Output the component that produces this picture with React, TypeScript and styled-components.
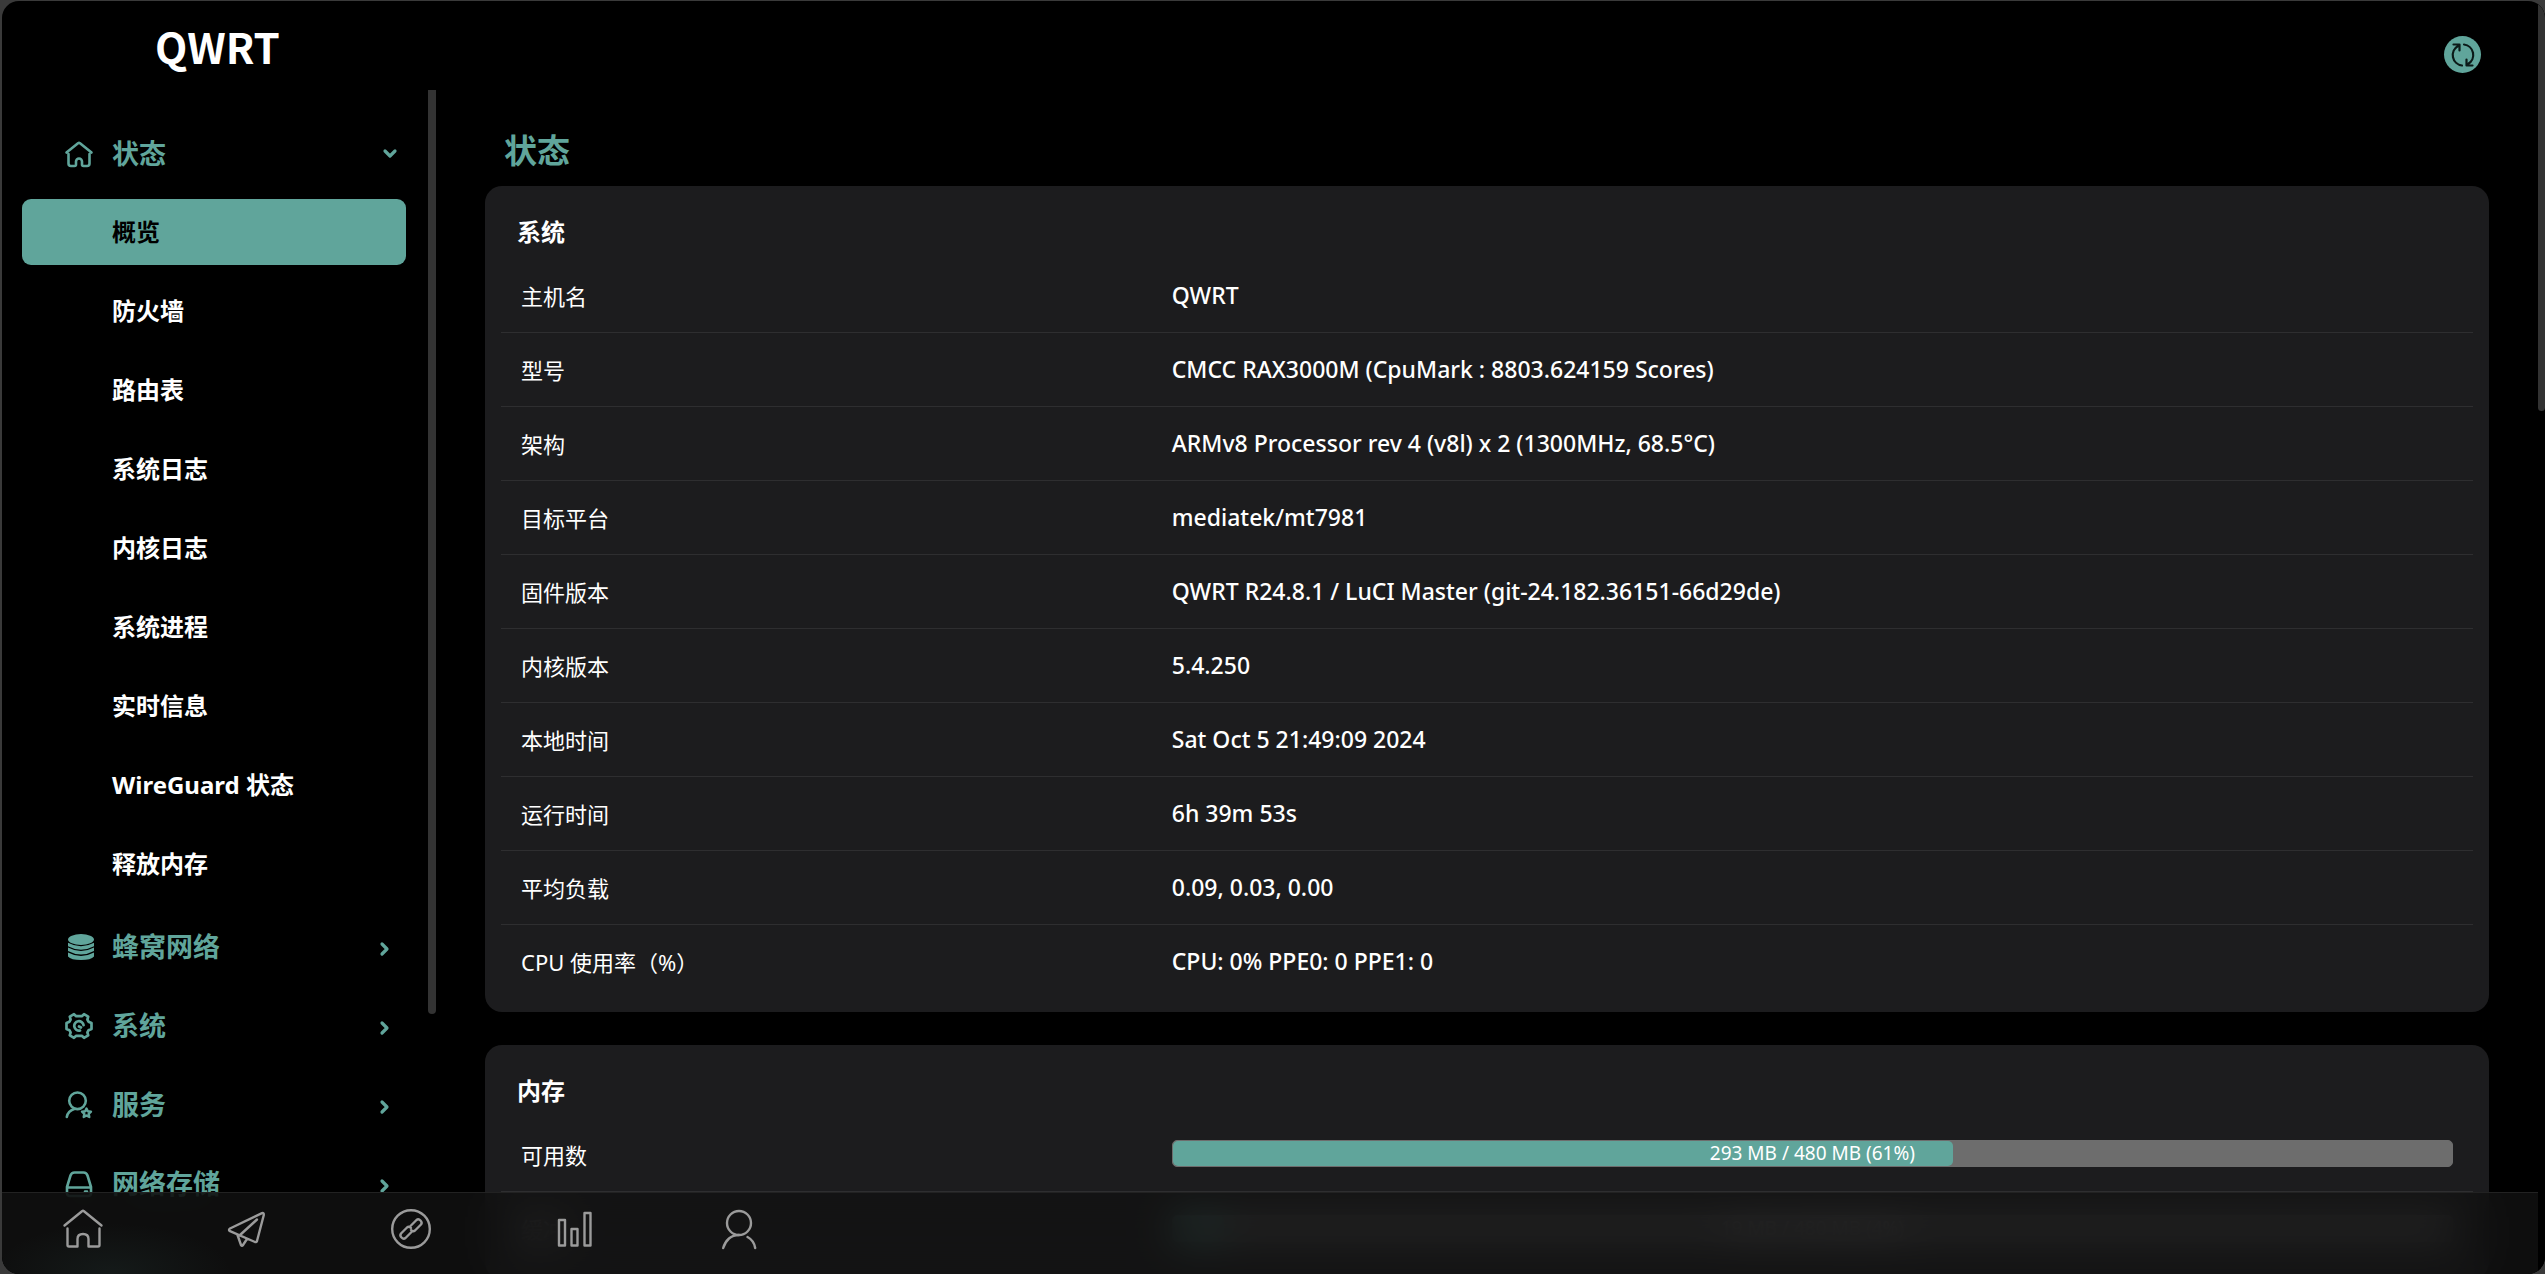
import React, { useId } from "react";
import styled, { createGlobalStyle, css } from "styled-components";

const teal = "#60a59b";
const sans = `"Noto Sans", "Noto Sans CJK SC", sans-serif`;

const GlobalStyle = createGlobalStyle`
  *, *::before, *::after { box-sizing: border-box; }
  html, body, #root { height: 100%; }
  body {
    margin: 0;
    background: #3a3a3a;
    color: #fff;
    font-family: ${sans};
    overflow: hidden;
  }
`;

const Frame = styled.div`
  height: 100%;
  padding: 1px 0 0 2px;
`;

const Shell = styled.div`
  position: relative;
  display: grid;
  grid-template-columns: 434px 1fr 7px;
  grid-template-rows: 89px minmax(0, 1fr);
  height: 100%;
  overflow: hidden;
  background: #000;
  border-radius: 17px;
`;

const TopBar = styled.header`
  grid-column: 1 / 3;
  display: flex;
  align-items: center;
  justify-content: space-between;
  padding: 0 57px 0 153px;
`;

const Logo = styled.a`
  color: #fff;
  font: 700 42px/60px "Noto Sans CJK SC", sans-serif;
  text-decoration: none;
`;

const RefreshButton = styled.button`
  display: flex;
  align-items: center;
  justify-content: center;
  width: 37px;
  height: 37px;
  margin-top: 18px;
  padding: 0;
  border: 0;
  border-radius: 50%;
  background: ${teal};
  color: #0b1a18;
`;

const PageScroll = styled.div`
  grid-column: 3;
  grid-row: 1 / 3;
  background: #000;
`;

const PageThumb = styled.div`
  height: 410px;
  border-radius: 0 0 4px 4px;
  background: #323232;
`;

const Sidebar = styled.aside`
  display: grid;
  grid-template-columns: 1fr 8px;
  min-height: 0;
`;

const Menu = styled.nav`
  padding: 30px 22px 0 20px;
  overflow: hidden;
`;

const MenuThumb = styled.div`
  height: 924px;
  border-radius: 0 0 4px 4px;
  background: #333;
`;

const MenuList = styled.ul`
  display: flex;
  flex-direction: column;
  gap: 13px;
  margin: 0;
  padding: 0;
  list-style: none;
`;

const SubList = styled(MenuList)`
  padding: 13px 0 3px;
`;

const Group = styled.button`
  display: grid;
  grid-template-columns: 28px 1fr 14px;
  column-gap: 19px;
  align-items: center;
  width: 100%;
  height: 66px;
  padding: 2px 9px 0 43px;
  border: 0;
  background: none;
  color: ${teal};
  font: 700 27px/40px ${sans};
  text-align: left;
`;

const SubLink = styled.a<{ $active?: boolean }>`
  display: block;
  height: 66px;
  padding-left: 90px;
  border-radius: 9px;
  color: #fff;
  font: 700 24px/66px ${sans};
  text-decoration: none;
  ${(p) =>
    p.$active &&
    css`
      background: ${teal};
      color: #000;
    `}
`;

const Content = styled.main`
  display: flex;
  flex-direction: column;
  gap: 33px;
  min-height: 0;
  padding: 0 49px;
  overflow: hidden;
`;

const PageTitle = styled.h2`
  margin: 37px 0 -22px;
  padding-left: 19px;
  color: ${teal};
  font: 700 33px/48px ${sans};
`;

const Card = styled.section`
  flex: none;
  padding: 0 16px 14px;
  border-radius: 17px;
  background: #1c1c1e;
`;

const CardTitle = styled.h3`
  margin: 0;
  padding: 20px 16px 0;
  font: 700 24px/52px ${sans};
`;

const InfoTable = styled.table`
  width: 100%;
  table-layout: fixed;
  border-collapse: collapse;
`;

const Row = styled.tr`
  height: 74px;
  border-bottom: 1px solid #2e2e30;
  &:last-child {
    border-bottom: 0;
  }
`;

const Label = styled.th`
  width: 33%;
  padding: 2px 20px 0;
  font: 400 22px/32px ${sans};
  text-align: left;
`;

const Value = styled.td`
  padding: 0 20px;
  font: 500 23px/32px ${sans};
`;

const Meter = styled.div`
  display: grid;
  height: 27px;
  overflow: hidden;
  border: 1px solid #6d6d6d;
  border-radius: 5px;
  background: #6d6d6d;
  & > * {
    grid-area: 1 / 1;
  }
`;

const MeterFill = styled.div`
  border-radius: 5px;
  background: ${teal};
`;

const MeterText = styled.span`
  font: 400 19px/24px ${sans};
  text-align: center;
`;

const Dock = styled.nav`
  position: absolute;
  inset: auto 7px 0 0;
  display: flex;
  gap: 124px;
  height: 82px;
  padding: 16px 61px 0;
  border-top: 1px solid #222;
  background:
    radial-gradient(120px 50px at 110px 80px, rgba(96, 165, 155, 0.08), transparent),
    rgba(18, 18, 18, 0.8);
  backdrop-filter: blur(20px);
`;

const DockLink = styled.a`
  display: block;
  width: 40px;
  height: 40px;
  color: #9b9b9b;
`;

const Svg = styled.svg`
  display: block;
  overflow: visible;
  fill: none;
  stroke: currentColor;
  stroke-linecap: round;
  stroke-linejoin: round;
`;

const SolidSvg = styled(Svg)`
  fill: currentColor;
  stroke: none;
`;

const icons = {
  home: (
    <Svg width="28" height="28" viewBox="0 0 28 28" strokeWidth="2.6">
      <path d="M1.500 12.500 13 3.200q1-.7 2 0l11.500 9.300M3.500 14v9.500q0 2.500 2.500 2.500h3.500q1.500 0 1.500-1.500V21.500a3 3 0 0 1 6 0V24.500q0 1.500 1.500 1.500H22q2.500 0 2.500-2.500V14" />
    </Svg>
  ),
  database: (
    <SolidSvg width="28" height="28" viewBox="0 0 28 28">
      <ellipse cx="16" cy="6.500" rx="13" ry="5.400" />
      <path d="M3 9.800Q16 16.800 29 9.800V13.200Q16 20.200 3 13.200zM3 14.600Q16 21.600 29 14.600V18Q16 25 3 18zM3 19.400Q16 26.400 29 19.400V23.500Q26 27 16 27T3 23.500z" />
    </SolidSvg>
  ),
  gear: (
    <Svg width="28" height="28" viewBox="0 0 28 28" strokeWidth="2.700">
      <path d="M11.200 4.200 9 2.200 4.800 4.600 5.600 7.600 4.500 9.700 1.500 11v6l3 1.300 1.100 2.100-.8 3L9 25.800l2.200-2h5.600l2.200 2 4.200-2.400-.8-3 1.100-2.100 3-1.300v-6l-3-1.300-1.100-2.100.8-3L19 2.200l-2.200 2zM18.600 13.200a4.700 4.700 0 1 0-3.600 5.300M14 14.500l2 1" />
    </Svg>
  ),
  service: (
    <Svg width="28" height="28" viewBox="0 0 28 28" strokeWidth="2.600">
      <circle cx="12.500" cy="9.800" r="8.300" />
      <path d="M1.800 26q1-6 8-8.200" />
      <path strokeWidth="2.400" d="m21.500 17.500 1.300 2.700 3.200.5-2.300 2.200.6 3.100-2.800-1.500-2.800 1.500.6-3.100-2.300-2.200 3.200-.5z" />
    </Svg>
  ),
  drive: (
    <Svg width="28" height="28" viewBox="0 0 28 28" strokeWidth="2.600">
      <path d="M2 17 5.500 5.500q1-3 4-3h9q3 0 4 3L26 17v6q0 3-3 3H5q-3 0-3-3zM2 17.500h24M20 21.500h2" />
    </Svg>
  ),
};

type IconName = keyof typeof icons;

const groups: { name: string; icon: IconName; open?: boolean }[] = [
  { name: "状态", icon: "home", open: true },
  { name: "蜂窝网络", icon: "database" },
  { name: "系统", icon: "gear" },
  { name: "服务", icon: "service" },
  { name: "网络存储", icon: "drive" },
];

const statusPages = ["概览", "防火墙", "路由表", "系统日志", "内核日志", "系统进程", "实时信息", "WireGuard 状态", "释放内存"];

const systemInfo = [
  ["主机名", "QWRT"],
  ["型号", "CMCC RAX3000M (CpuMark : 8803.624159 Scores)"],
  ["架构", "ARMv8 Processor rev 4 (v8l) x 2 (1300MHz, 68.5°C)"],
  ["目标平台", "mediatek/mt7981"],
  ["固件版本", "QWRT R24.8.1 / LuCI Master (git-24.182.36151-66d29de)"],
  ["内核版本", "5.4.250"],
  ["本地时间", "Sat Oct 5 21:49:09 2024"],
  ["运行时间", "6h 39m 53s"],
  ["平均负载", "0.09, 0.03, 0.00"],
  ["CPU 使用率（%）", "CPU: 0% PPE0: 0 PPE1: 0"],
];

const memory = [
  { label: "可用数", used: 293, percent: 61 },
  { label: "缓冲", used: 19, percent: 4 },
];

const dock = [
  {
    name: "首页",
    art: <path d="M1.500 16.500 19 2.200q1-.8 2 0l17.500 14.300M4.500 19.500V36q0 1.500 1.500 1.500h8.500V30q0-5 5.500-5t5.500 5v7.500H35q1.500 0 1.500-1.500V19.500" />,
  },
  {
    name: "发送",
    art: <path d="M35 4.200 3 19.500q-2 1.500 0 2.700L28 33q1.500.5 2-1l6.800-26q.2-2.500-1.800-1.800zM30 10.500 12.500 26.500M10.500 26 14 36q1 1.500 2 0l4-6" />,
  },
  {
    name: "连接",
    art: (
      <>
        <circle cx="20" cy="20" r="18.800" />
        <path d="m19 17.500 6.500-6.500q2-1.500 4 .5t.5 4L24 21.500q-2 1.500-4-.5M21 22.500 14.500 29q-2 1.500-4-.5t-.5-4L16 18.500q2-1.500 4 .5" />
      </>
    ),
  },
  {
    name: "统计",
    art: <path d="M4 11h6v25.500H4zM16.500 20h6v16.500h-6zM29.500 4h6v32.500h-6z" />,
  },
  {
    name: "用户",
    art: (
      <>
        <circle cx="20" cy="14" r="12" />
        <path d="M20 26q-6 0-10 3.500T4.200 39M28.500 28q6.500 3.500 7.700 11" />
      </>
    ),
  },
];

function Chevron({ open }: { open?: boolean }) {
  return (
    <Svg width="14" height="20" viewBox="0 0 14 20" strokeWidth="3.200">
      {open ? <path d="m2 7 5 5 5-5" /> : <path d="m-1 7 5 5-5 5" />}
    </Svg>
  );
}

function MenuGroup({ name, icon, open }: { name: string; icon: IconName; open?: boolean }) {
  return (
    <li>
      <Group type="button" aria-expanded={!!open}>
        {icons[icon]}
        <span>{name}</span>
        <Chevron open={open} />
      </Group>
      {open && (
        <SubList>
          {statusPages.map((page, i) => (
            <li key={page}>
              <SubLink href="#" $active={i === 0}>
                {page}
              </SubLink>
            </li>
          ))}
        </SubList>
      )}
    </li>
  );
}

export default function App() {
  const systemId = useId();
  const memoryId = useId();
  return (
    <Frame>
      <GlobalStyle />
      <Shell>
        <TopBar>
          <Logo href="#">QWRT</Logo>
          <RefreshButton type="button" aria-label="刷新">
            <Svg width="26" height="26" viewBox="0 0 26 26" strokeWidth="2.200">
              <path d="M12 23.500A10.500 10.500 0 0 1 8 4M3.500 2.500H9.500V8.500M14 2.500A10.500 10.500 0 0 1 18 22M22.500 23.500H16.500V17.500" />
            </Svg>
          </RefreshButton>
        </TopBar>
        <PageScroll>
          <PageThumb />
        </PageScroll>
        <Sidebar>
          <Menu>
            <MenuList>
              {groups.map((g) => (
                <MenuGroup key={g.name} {...g} />
              ))}
            </MenuList>
          </Menu>
          <MenuThumb />
        </Sidebar>
        <Content>
          <PageTitle>状态</PageTitle>
          <Card aria-labelledby={systemId}>
            <CardTitle id={systemId}>系统</CardTitle>
            <InfoTable>
              <tbody>
                {systemInfo.map(([label, value]) => (
                  <Row key={label}>
                    <Label scope="row">{label}</Label>
                    <Value>{value}</Value>
                  </Row>
                ))}
              </tbody>
            </InfoTable>
          </Card>
          <Card aria-labelledby={memoryId}>
            <CardTitle id={memoryId}>内存</CardTitle>
            <InfoTable>
              <tbody>
                {memory.map((m) => (
                  <Row key={m.label}>
                    <Label scope="row">{m.label}</Label>
                    <Value>
                      <Meter>
                        <MeterFill style={{ width: `${m.percent}%` }} />
                        <MeterText>{`${m.used} MB / 480 MB (${m.percent}%)`}</MeterText>
                      </Meter>
                    </Value>
                  </Row>
                ))}
              </tbody>
            </InfoTable>
          </Card>
        </Content>
        <Dock>
          {dock.map((d) => (
            <DockLink key={d.name} href="#" aria-label={d.name}>
              <Svg width="40" height="40" viewBox="0 0 40 40" strokeWidth="2.400">
                {d.art}
              </Svg>
            </DockLink>
          ))}
        </Dock>
      </Shell>
    </Frame>
  );
}
